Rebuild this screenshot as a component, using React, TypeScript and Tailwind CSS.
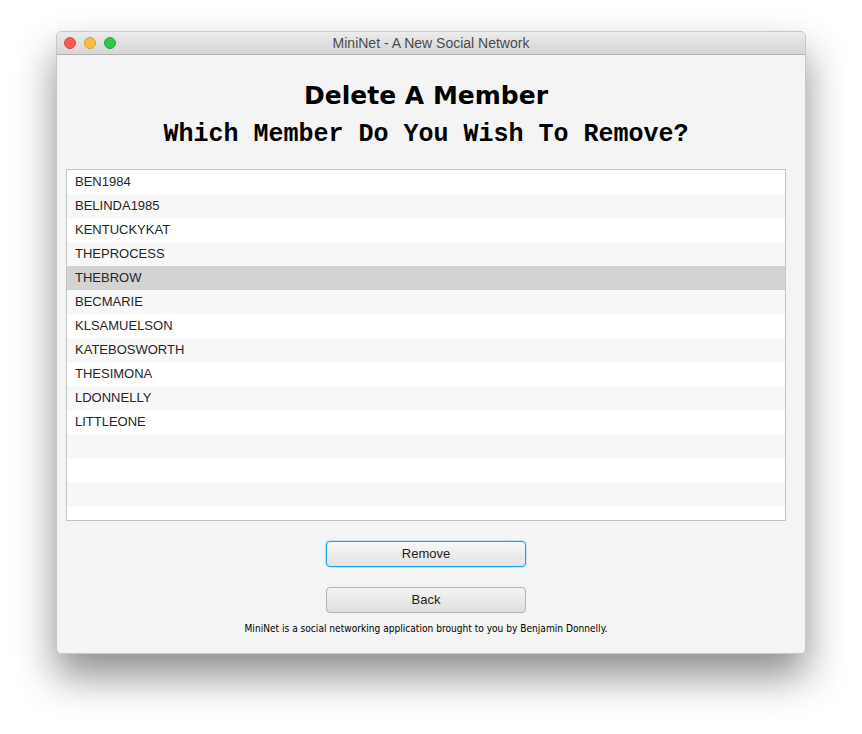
import React from "react";

const members = [
  "BEN1984",
  "BELINDA1985",
  "KENTUCKYKAT",
  "THEPROCESS",
  "THEBROW",
  "BECMARIE",
  "KLSAMUELSON",
  "KATEBOSWORTH",
  "THESIMONA",
  "LDONNELLY",
  "LITTLEONE",
  "",
  "",
  "",
  "",
];

export default function App() {
  return (
    <div className="w-[862px] h-[734px] bg-white pt-[31px] pl-[56px] overflow-hidden">
      <div className="w-[750px] h-[623px] flex flex-col rounded-[5px] overflow-hidden bg-[#f4f4f4] border border-[#c8c8c8] shadow-[0_22px_40px_rgba(0,0,0,0.45)]">
        {/* title bar */}
        <div className="relative h-[23px] shrink-0 flex items-center justify-center bg-gradient-to-b from-[#ececec] to-[#d5d5d5] border-b border-[#b1b1b1]">
          <div className="absolute left-[7px] top-[5px] flex gap-[8px]">
            <div className="w-[12px] h-[12px] rounded-full bg-[#fc5753] border border-[#df4744]" />
            <div className="w-[12px] h-[12px] rounded-full bg-[#fdbc40] border border-[#de9f34]" />
            <div className="w-[12px] h-[12px] rounded-full bg-[#33c748] border border-[#27aa35]" />
          </div>
          <span className="text-[14px] text-[#4a4a4a] font-['Liberation_Sans',sans-serif]">
            MiniNet - A New Social Network
          </span>
        </div>
        {/* content */}
        <div className="flex flex-col items-center pl-[9px] pr-[19px]">
          <div className="mt-[23px] h-[34px] flex items-center text-[25px] leading-none font-bold text-black font-['DejaVu_Sans',sans-serif]">
            Delete A Member
          </div>
          <div className="mt-[4px] h-[36px] flex items-center text-[25px] leading-none font-bold text-black font-['Liberation_Mono',monospace]">
            Which Member Do You Wish To Remove?
          </div>
          <div className="mt-[17px] w-[720px] h-[352px] border border-[#c4c4c4] bg-white overflow-hidden">
            {members.map((m, i) => (
              <div
                key={i}
                className={
                  "h-[24px] flex items-center pl-[8px] text-[13px] text-[#262626] font-['Liberation_Sans',sans-serif] " +
                  (m === "THEBROW"
                    ? "bg-[#d3d3d3]"
                    : i % 2 === 1
                    ? "bg-[#f8f8f8]"
                    : "bg-white")
                }
              >
                {m}
              </div>
            ))}
          </div>
          <button className="mt-[20px] w-[200px] h-[26px] rounded-[4px] border-[1.5px] border-[#1ba3e3] bg-gradient-to-b from-[#f7f7f7] to-[#e2e2e2] text-[13px] text-[#222] font-['Liberation_Sans',sans-serif] shadow-[0_0_0_1px_rgba(27,163,227,0.25)]">
            Remove
          </button>
          <button className="mt-[20px] w-[200px] h-[26px] rounded-[4px] border border-[#b3b3b3] bg-gradient-to-b from-[#f4f4f4] to-[#dfdfdf] text-[13px] text-[#222] font-['Liberation_Sans',sans-serif]">
            Back
          </button>
          <div className="mt-[8px] text-[10.1px] text-black font-['DejaVu_Sans_Condensed','DejaVu_Sans',sans-serif]">
            MiniNet is a social networking application brought to you by Benjamin Donnelly.
          </div>
        </div>
      </div>
    </div>
  );
}
